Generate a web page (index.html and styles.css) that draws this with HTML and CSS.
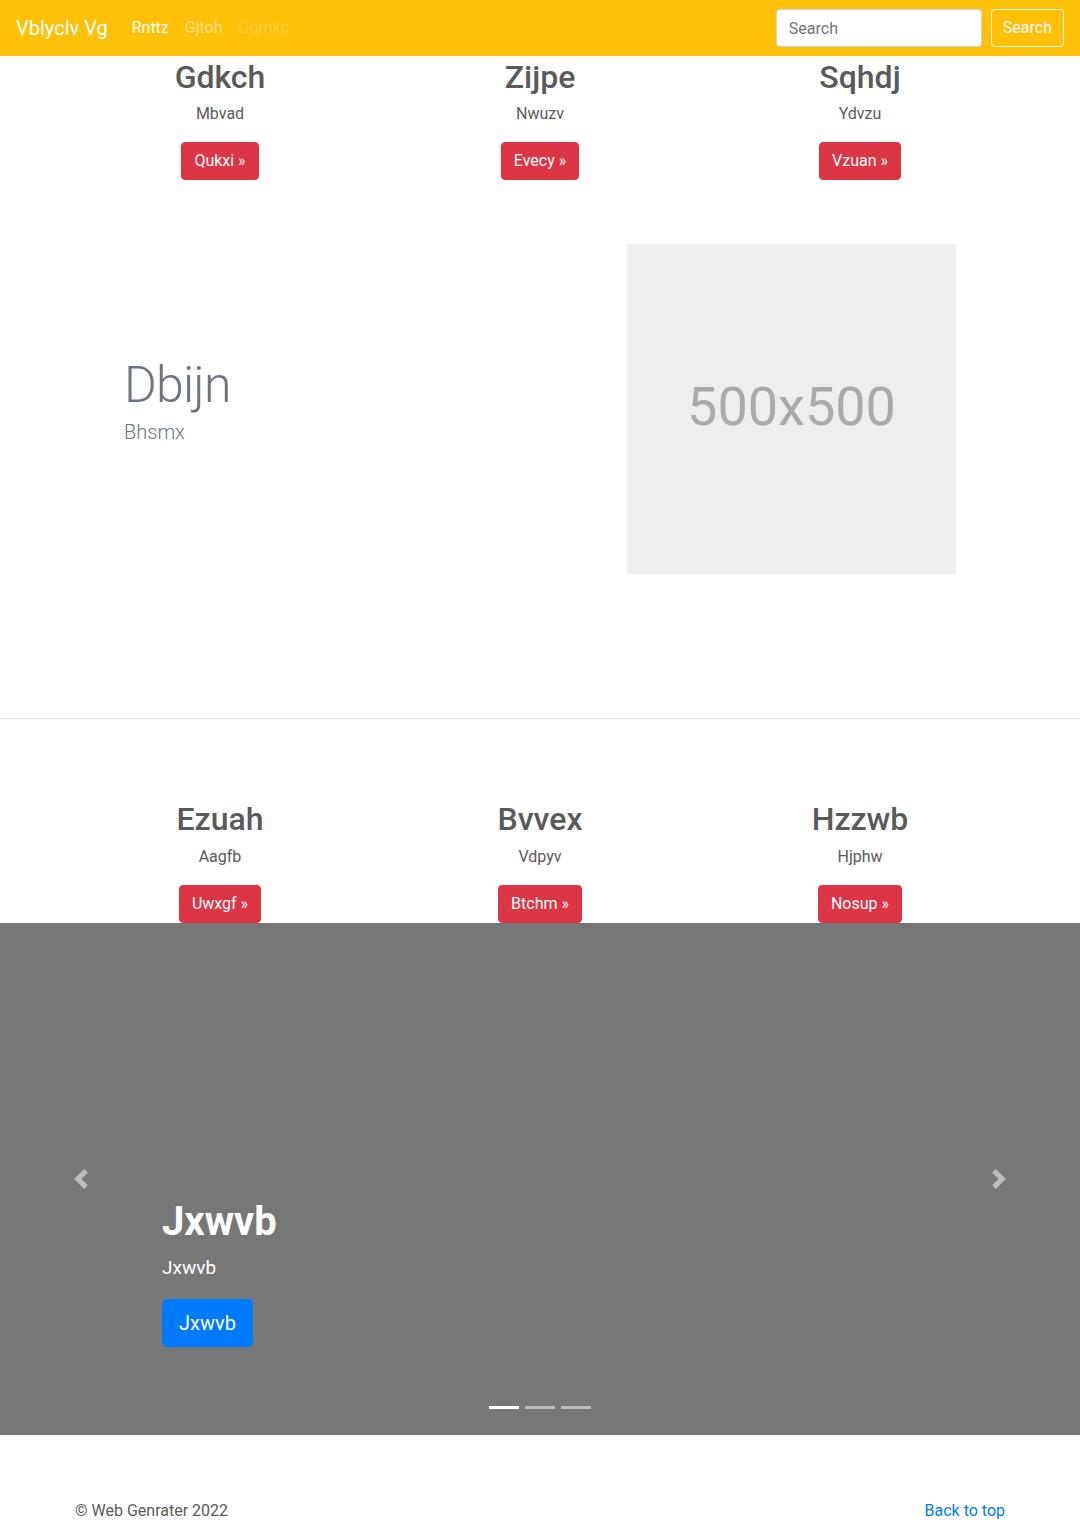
FILE: index.html
```html
<!DOCTYPE html>
<html>
<head>
	<title>Vblyclv Vg</title>
	<link rel="stylesheet" href="styles.css">
</head>
<body>
	<header class="navbar">
		<a class="navbar__brand" href="#">Vblyclv Vg</a>
		<ul class="navbar__nav">
			<li><a class="navbar__link navbar__link--active" href="#">Rnttz</a></li>
			<li><a class="navbar__link" href="#">Gjtoh</a></li>
			<li><a class="navbar__link navbar__link--disabled" href="#">Oqmkc</a></li>
		</ul>
		<form class="navbar__form">
			<input class="navbar__input" type="text" placeholder="Search" />
			<button class="navbar__btn" type="button">Search</button>
		</form>
	</header>

	<main>
		<div class="container marketing">
			<div class="marketing__col">
				<h2 class="marketing__title">Gdkch</h2>
				<p class="marketing__text">Mbvad</p>
				<p><a class="btn btn--danger" href="#">Qukxi &raquo;</a></p>
			</div>
			<div class="marketing__col">
				<h2 class="marketing__title">Zijpe</h2>
				<p class="marketing__text">Nwuzv</p>
				<p><a class="btn btn--danger" href="#">Evecy &raquo;</a></p>
			</div>
			<div class="marketing__col">
				<h2 class="marketing__title">Sqhdj</h2>
				<p class="marketing__text">Ydvzu</p>
				<p><a class="btn btn--danger" href="#">Vzuan &raquo;</a></p>
			</div>
		</div>

		<div class="container featurette">
			<div class="featurette__text">
				<h2 class="featurette__heading">Dbijn</h2>
				<p class="featurette__lead">Bhsmx</p>
			</div>
			<div class="featurette__media">
				<div class="placeholder">500x500</div>
			</div>
		</div>

		<hr class="divider" />

		<div class="container marketing marketing--last">
			<div class="marketing__col">
				<h2 class="marketing__title">Ezuah</h2>
				<p class="marketing__text">Aagfb</p>
				<p><a class="btn btn--danger" href="#">Uwxgf &raquo;</a></p>
			</div>
			<div class="marketing__col">
				<h2 class="marketing__title">Bvvex</h2>
				<p class="marketing__text">Vdpyv</p>
				<p><a class="btn btn--danger" href="#">Btchm &raquo;</a></p>
			</div>
			<div class="marketing__col">
				<h2 class="marketing__title">Hzzwb</h2>
				<p class="marketing__text">Hjphw</p>
				<p><a class="btn btn--danger" href="#">Nosup &raquo;</a></p>
			</div>
		</div>

		<div class="carousel">
			<a class="carousel__control carousel__control--prev" href="#">
				<svg width="20" height="20" viewBox="0 0 8 8"><path fill="#fff" d="M5.25 0l-4 4 4 4 1.5-1.5L4.25 4l2.5-2.5L5.25 0z"/></svg>
			</a>
			<div class="carousel__caption">
				<h1 class="carousel__title">Jxwvb</h1>
				<p class="carousel__text">Jxwvb</p>
				<p><a class="btn btn--primary btn--lg" href="#">Jxwvb</a></p>
			</div>
			<a class="carousel__control carousel__control--next" href="#">
				<svg width="20" height="20" viewBox="0 0 8 8"><path fill="#fff" d="M2.75 0l-1.5 1.5L3.75 4l-2.5 2.5L2.75 8l4-4-4-4z"/></svg>
			</a>
			<ol class="carousel__indicators">
				<li class="carousel__dot carousel__dot--active"></li>
				<li class="carousel__dot"></li>
				<li class="carousel__dot"></li>
			</ol>
		</div>

		<footer class="container footer">
			<p>&copy; Web Genrater 2022</p>
			<p><a class="footer__link" href="#">Back to top</a></p>
		</footer>
	</main>
</body>
</html>
```

FILE: styles.css
```css
* {
	box-sizing: border-box;
}
html {
	background: #FFFFFF;
}
body {
	margin: 0;
	font-family: Roboto, "Noto Sans", "Liberation Sans", sans-serif;
	font-size: 16px;
	line-height: 1.5;
	color: #5a5a5a;
}
a {
	text-decoration: none;
}
p {
	margin: 0 0 16px;
}
h1, h2 {
	margin: 0 0 8px;
	line-height: 1.2;
}

/* 导航 */
.navbar {
	display: flex;
	align-items: center;
	height: 56px;
	padding: 8px 16px;
	background: #FFC107;
}
.navbar__brand {
	margin-right: 16px;
	font-size: 20px;
	color: #FFFFFF;
}
.navbar__nav {
	display: flex;
	margin: 0;
	padding: 0;
	list-style: none;
}
.navbar__link {
	display: block;
	padding: 8px;
	color: rgba(255, 255, 255, .5);
}
.navbar__link--active {
	color: #FFFFFF;
}
.navbar__link--disabled {
	color: rgba(255, 255, 255, .25);
}
.navbar__form {
	display: flex;
	margin-left: auto;
}
.navbar__input {
	width: 206px;
	height: 38px;
	margin-right: 9px;
	padding: 6px 12px;
	font: inherit;
	color: #495057;
	border: 1px solid #ced4da;
	border-radius: 4px;
}
.navbar__input::placeholder {
	color: #6c757d;
}
.navbar__btn {
	height: 38px;
	padding: 6px 11px;
	font: inherit;
	color: #f8f9fa;
	background: transparent;
	border: 1px solid #f8f9fa;
	border-radius: 4px;
}

/* 通用 */
.container {
	width: 960px;
	margin: 0 auto;
	padding: 0 15px;
}
.btn {
	display: inline-block;
	padding: 6px 12px;
	font-size: 16px;
	line-height: 1.5;
	border: 1px solid transparent;
	border-radius: 4px;
}
.btn--danger {
	color: #FFFFFF;
	background: #dc3545;
	border-color: #dc3545;
}
.btn--primary {
	color: #FFFFFF;
	background: #007bff;
	border-color: #007bff;
}
.btn--lg {
	padding: 8px 16px;
	font-size: 20px;
	border-radius: 5px;
}

/* 三栏 */
.marketing {
	display: grid;
	grid-template-columns: repeat(3, 1fr);
	padding: 0;
	text-align: center;
}
.marketing__title {
	padding-top: 2px;
	margin-bottom: 6px;
	font-size: 32px;
	font-weight: 500;
}
.marketing--last {
	margin-top: 79px;
}
.marketing--last p:last-child {
	margin-bottom: 0;
}

/* 图文 */
.featurette {
	display: grid;
	grid-template-columns: 1fr 1fr;
	align-items: center;
	margin-top: 48px;
	padding: 0 64px;
}
.featurette__heading {
	margin-bottom: 2px;
	font-size: 50px;
	font-weight: 300;
	letter-spacing: -0.8px;
	color: #6c757d;
}
.featurette__lead {
	font-size: 20px;
	font-weight: 300;
	color: #6c757d;
}
.featurette__media {
	display: flex;
	justify-content: flex-end;
}
.placeholder {
	display: flex;
	align-items: center;
	justify-content: center;
	width: 329px;
	height: 330px;
	padding-bottom: 6px;
	font-size: 54px;
	color: #aaaaaa;
	background: #eeeeee;
}
.divider {
	margin: 144px 0 0;
	border: 0;
	border-top: 1px solid #e2e2e2;
}

/* 轮播 */
.carousel {
	position: relative;
	display: flex;
	align-items: center;
	justify-content: space-between;
	height: 512px;
	margin-bottom: 64px;
	background: #777777;
}
.carousel__control {
	display: flex;
	align-items: center;
	justify-content: center;
	width: 15%;
	height: 100%;
	opacity: .5;
}
.carousel__caption {
	position: absolute;
	left: 15%;
	right: 15%;
	bottom: 48px;
	padding-bottom: 24px;
	color: #FFFFFF;
}
.carousel__title {
	font-size: 40px;
	font-weight: 700;
}
.carousel__text {
	font-size: 19px;
}
.carousel__indicators {
	position: absolute;
	left: 0;
	right: 0;
	bottom: 16px;
	display: flex;
	justify-content: center;
	margin: 0;
	padding: 0;
	list-style: none;
}
.carousel__dot {
	width: 30px;
	height: 3px;
	margin: 10px 3px;
	background: #FFFFFF;
	opacity: .5;
}
.carousel__dot--active {
	opacity: 1;
}

/* 页脚 */
.footer {
	display: flex;
	justify-content: space-between;
}
.footer__link {
	color: #007bff;
}
```
